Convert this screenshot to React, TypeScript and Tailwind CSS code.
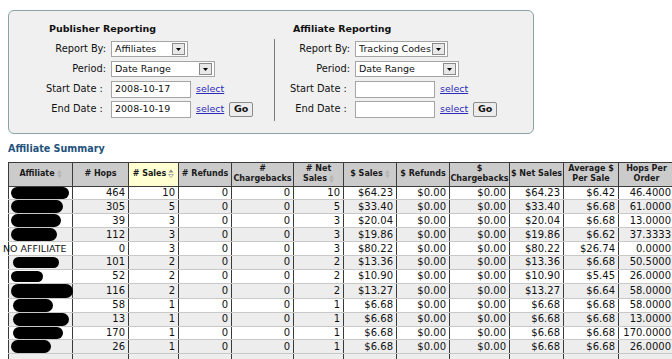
import React from "react";

const F = "font-['DejaVu_Sans',Verdana,sans-serif]";

function Caret() {
  return (
    <span className="flex h-[12px] w-[13px] shrink-0 items-center justify-center border border-[#8a8a8a] bg-[#e8e8e8]">
      <svg width="5" height="3" viewBox="0 0 5 3"><path d="M0 0h5L2.5 3z" fill="#000" /></svg>
    </span>
  );
}

function Select({ text, w }: { text: string; w: string }) {
  return (
    <div className={`flex h-[16px] items-center justify-between border border-[#a5a5a5] bg-white pl-[3px] pr-[2px] ${w}`}>
      <span className="whitespace-nowrap text-[9.5px] leading-none text-[#111]">{text}</span>
      <Caret />
    </div>
  );
}

function Input({ value }: { value?: string }) {
  return (
    <div className="flex h-[17px] w-[80px] items-center border border-[#a5a5a5] bg-white pl-[3px] text-[9.5px] leading-none text-[#111]">
      {value}
    </div>
  );
}

function Link() {
  return <span className="ml-[5px] text-[9.5px] leading-none text-[#2c2cb8] underline">select</span>;
}

function Go() {
  return (
    <span className="ml-[5px] flex h-[15px] w-[24px] items-center justify-center rounded-[2px] border border-[#8c8c8c] bg-[#ececec] text-[9.5px] font-bold leading-none text-[#111]">
      Go
    </span>
  );
}

function Section({ title, sel1, sel1w, start, end }: { title: string; sel1: string; sel1w: string; start?: string; end?: string }) {
  const Row = ({ label, children }: { label: string; children: React.ReactNode }) => (
    <div className="flex h-[20px] items-center">
      <div className="w-[70px] whitespace-pre text-right text-[9.8px] leading-none text-[#111]">{label}</div>
      <div className="ml-[5px] flex items-center">{children}</div>
    </div>
  );
  return (
    <div className="flex flex-col">
      <div className="ml-[13px] h-[11px] whitespace-nowrap text-[9.5px] font-bold leading-[11px] text-[#111]">{title}</div>
      <div className="mt-[5px] flex flex-col">
        <Row label="Report By:"><Select text={sel1} w={sel1w} /></Row>
        <Row label="Period:"><Select text="Date Range" w="w-[104px]" /></Row>
        <Row label={"Start Date :\u00a0"}><Input value={start} /><Link /></Row>
        <Row label={"End Date :\u00a0"}><Input value={end} /><Link /><Go /></Row>
      </div>
    </div>
  );
}

type R = { blob?: [number, number, number]; name?: string; v: (string | number)[] };
const rows: R[] = [
  { blob: [2, 58, 13], v: [464, 10, 0, 0, 10, "$64.23", "$0.00", "$0.00", "$64.23", "$6.42", "46.4000"] },
  { blob: [2, 52, 14], v: [305, 5, 0, 0, 5, "$33.40", "$0.00", "$0.00", "$33.40", "$6.68", "61.0000"] },
  { blob: [2, 50, 14], v: [39, 3, 0, 0, 3, "$20.04", "$0.00", "$0.00", "$20.04", "$6.68", "13.0000"] },
  { blob: [2, 46, 14], v: [112, 3, 0, 0, 3, "$19.86", "$0.00", "$0.00", "$19.86", "$6.62", "37.3333"] },
  { name: "NO AFFILIATE", v: [0, 3, 0, 0, 3, "$80.22", "$0.00", "$0.00", "$80.22", "$26.74", "0.0000"] },
  { blob: [4, 46, 12], v: [101, 2, 0, 0, 2, "$13.36", "$0.00", "$0.00", "$13.36", "$6.68", "50.5000"] },
  { blob: [2, 32, 12], v: [52, 2, 0, 0, 2, "$10.90", "$0.00", "$0.00", "$10.90", "$5.45", "26.0000"] },
  { blob: [2, 62, 15], v: [116, 2, 0, 0, 2, "$13.27", "$0.00", "$0.00", "$13.27", "$6.64", "58.0000"] },
  { blob: [4, 40, 14], v: [58, 1, 0, 0, 1, "$6.68", "$0.00", "$0.00", "$6.68", "$6.68", "58.0000"] },
  { blob: [4, 56, 14], v: [13, 1, 0, 0, 1, "$6.68", "$0.00", "$0.00", "$6.68", "$6.68", "13.0000"] },
  { blob: [4, 50, 13], v: [170, 1, 0, 0, 1, "$6.68", "$0.00", "$0.00", "$6.68", "$6.68", "170.0000"] },
  { blob: [2, 40, 14], v: [26, 1, 0, 0, 1, "$6.68", "$0.00", "$0.00", "$6.68", "$6.68", "26.0000"] },
];

const widths = [64, 56, 50, 53, 62, 50, 53, 53, 60, 54, 55, 56];

function FaintSort() {
  return (
    <svg width="5" height="8" viewBox="0 0 5 8" className="ml-[2px] inline-block align-middle opacity-20">
      <path d="M0 3.5L2.5 0L5 3.5z M0 4.5L2.5 8L5 4.5z" fill="#555" />
    </svg>
  );
}

function H({ children, sorted }: { children: React.ReactNode; sorted?: boolean }) {
  return (
    <th className={`h-[23.5px] whitespace-nowrap border border-[#3c3c3c] px-0 py-0 text-center align-middle text-[8px] font-bold leading-[10px] text-[#1a1a1a] ${sorted ? "bg-[#ffffd2]" : "bg-[#cbcbcb]"}`}>
      {children}
    </th>
  );
}

const tdBase = "h-[13.8px] whitespace-nowrap border-x border-x-[#3a3a3a] border-y border-y-[#c8c8c8] py-0 leading-[12px] text-[#111]";

export default function App() {
  return (
    <div className={`h-[359px] w-[672px] overflow-hidden bg-white ${F}`}>
      <div className="ml-[8px] mt-[10px] flex h-[124px] w-[526px] rounded-[6px] border border-[#8aa3a6] bg-[#f0f0f0] pt-[12px]">
        <div className="w-[265px] pl-[27px]">
          <Section title="Publisher Reporting" sel1="Affiliates" sel1w="w-[77px]" start="2008-10-17" end="2008-10-19" />
        </div>
        <div className="mt-[16px] h-[82px] w-px bg-[#7a7a7a]" />
        <div className="pl-[5px]">
          <Section title="Affiliate Reporting" sel1="Tracking Codes" sel1w="w-[93px]" />
        </div>
      </div>
      <div className="ml-[8px] mt-[9px] h-[12px] text-[9.6px] font-bold leading-[12px] text-[#23527c]">Affiliate Summary</div>
      <table className="ml-[8px] mt-[7px] table-fixed border-collapse" style={{ width: widths.reduce((a, b) => a + b, 0) }}>
        <colgroup>
          {widths.map((w, i) => <col key={i} style={{ width: w }} />)}
        </colgroup>
        <thead>
          <tr>
            <H>Affiliate<FaintSort /></H>
            <H># Hops</H>
            <H sorted>
              # Sales
              <svg width="6" height="9" viewBox="0 0 6 9" className="ml-[2px] inline-block align-middle">
                <path d="M0.5 3.5L3 0.5L5.5 3.5z" fill="#8a8a8a" />
                <path d="M0.5 5.5L3 8.5L5.5 5.5z" fill="none" stroke="#9a9a9a" strokeWidth="0.8" />
              </svg>
            </H>
            <H># Refunds</H>
            <H>#<br />Chargebacks</H>
            <H># Net<br />Sales<FaintSort /></H>
            <H>$ Sales<FaintSort /></H>
            <H>$ Refunds</H>
            <H>$<br />Chargebacks</H>
            <H>$ Net Sales</H>
            <H>Average $<br />Per Sale</H>
            <H>Hops Per<br />Order</H>
          </tr>
        </thead>
        <tbody>
          {rows.map((r, i) => (
            <tr key={i} className={i % 2 === 1 ? "bg-[#ededed]" : "bg-white"}>
              <td className={`${tdBase} overflow-visible p-0 text-left text-[9.5px]`}>
                {r.name ? (
                  <span className="-ml-[6px]">{r.name}</span>
                ) : (
                  <span
                    className="inline-block rounded-full bg-black align-middle"
                    style={{ marginLeft: r.blob![0], width: r.blob![1], height: r.blob![2] - 1 }}
                  />
                )}
              </td>
              {r.v.map((c, j) => (
                <td key={j} className={`${tdBase} pl-0 pr-[3px] text-right text-[10px]`}>
                  {c}
                </td>
              ))}
            </tr>
          ))}
          <tr className="bg-[#ededed]">
            {widths.map((_, j) => (
              <td key={j} className={`${tdBase} p-0`} />
            ))}
          </tr>
        </tbody>
      </table>
    </div>
  );
}
